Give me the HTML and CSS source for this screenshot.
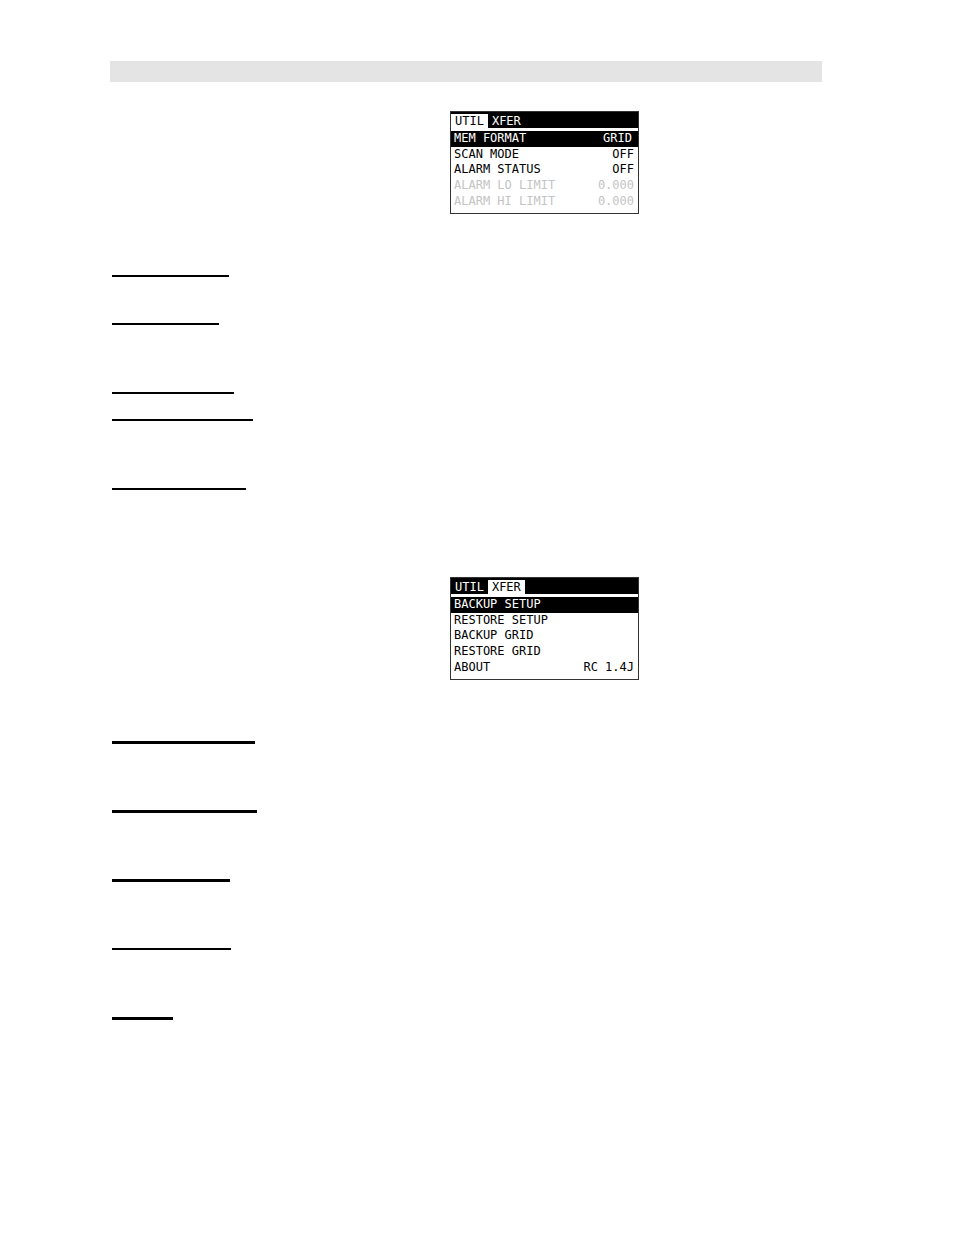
FILE: index.html
```html
<!DOCTYPE html>
<html lang="en">
<head>
  <meta charset="UTF-8">
  <meta name="viewport" content="width=device-width, initial-scale=1.0">
  <title>UTIL / XFER menus</title>
  <link rel="stylesheet" href="styles.css">
</head>
<body>
  <header class="page-bar"></header>

  <main>
    <section>
      <div class="screen">
        <nav class="tabs">
          <button class="tab active">UTIL</button>
          <button class="tab">XFER</button>
        </nav>
        <div class="menu">
          <button class="row selected"><span>MEM FORMAT</span><span>GRID</span></button>
          <button class="row"><span>SCAN MODE</span><span>OFF</span></button>
          <button class="row"><span>ALARM STATUS</span><span>OFF</span></button>
          <button class="row" disabled><span>ALARM LO LIMIT</span><span>0.000</span></button>
          <button class="row" disabled><span>ALARM HI LIMIT</span><span>0.000</span></button>
        </div>
      </div>
      <div class="entries">
        <div class="entry short"><hr class="mem-format"></div>
        <div class="entry"><hr class="scan-mode"></div>
        <div class="entry line"><hr class="alarm-status"></div>
        <div class="entry"><hr class="alarm-lo"></div>
        <div class="entry last"><hr class="alarm-hi"></div>
      </div>
    </section>

    <section>
      <div class="screen">
        <nav class="tabs">
          <button class="tab">UTIL</button>
          <button class="tab active">XFER</button>
        </nav>
        <div class="menu">
          <button class="row selected"><span>BACKUP SETUP</span></button>
          <button class="row"><span>RESTORE SETUP</span></button>
          <button class="row"><span>BACKUP GRID</span></button>
          <button class="row"><span>RESTORE GRID</span></button>
          <button class="row"><span>ABOUT</span><span>RC 1.4J</span></button>
        </div>
      </div>
      <div class="entries">
        <div class="entry"><hr class="thick backup-setup"></div>
        <div class="entry"><hr class="thick restore-setup"></div>
        <div class="entry"><hr class="thick backup-grid"></div>
        <div class="entry"><hr class="restore-grid"></div>
        <div class="entry"><hr class="thick about"></div>
      </div>
    </section>
  </main>
</body>
</html>
```

FILE: styles.css
```css
* { box-sizing: border-box; margin: 0; padding: 0; }
body {
  background: #fff;
  color: #000;
  padding: 61px 132px 61px 110px;
  font-family: "DejaVu Sans Mono", monospace;
  font-size: 12px;
}
.page-bar {
  height: 21px;
  margin-bottom: 29px;
  background: #e4e4e4;
}

/* instrument screen */
.screen {
  width: 189px;
  margin-left: 340px;
  border: 1px solid #333;
}
.tabs {
  display: flex;
  padding-top: 2px;
  background: #000;
}
button {
  border: none;
  background: none;
  color: inherit;
  font: inherit;
}
.tab {
  height: 14px;
  padding: 0 4px;
  line-height: 14px;
  color: #fff;
}
.tab.active {
  background: #fff;
  color: #000;
}
.menu {
  display: grid;
  grid-auto-rows: 1fr;
  height: 78px;
  margin: 3px 0 4px;
}
.row {
  display: flex;
  justify-content: space-between;
  align-items: center;
  padding: 0 4px 0 3px;
  line-height: 15px;
}
.row.selected {
  padding-right: 6px;
  background: #000;
  color: #fff;
}
.row:disabled {
  color: #c4c4c4;
}

/* underlines of the entries */
.entries {
  margin-top: 61px;
  padding-left: 2px;
}
.entry { min-height: 69px; }
.entry.short { min-height: 48px; }
.entry.line { min-height: 27px; }
.entry.last { min-height: 89px; }
hr {
  height: 2px;
  border: none;
  background: #000;
}
hr.thick { height: 3px; }
.mem-format { width: 117px; }
.scan-mode { width: 107px; }
.alarm-status { width: 122px; }
.alarm-lo { width: 141px; }
.alarm-hi { width: 134px; }
.backup-setup { width: 143px; }
.restore-setup { width: 145px; }
.backup-grid { width: 118px; }
.restore-grid { width: 119px; }
.about { width: 61px; }
```
